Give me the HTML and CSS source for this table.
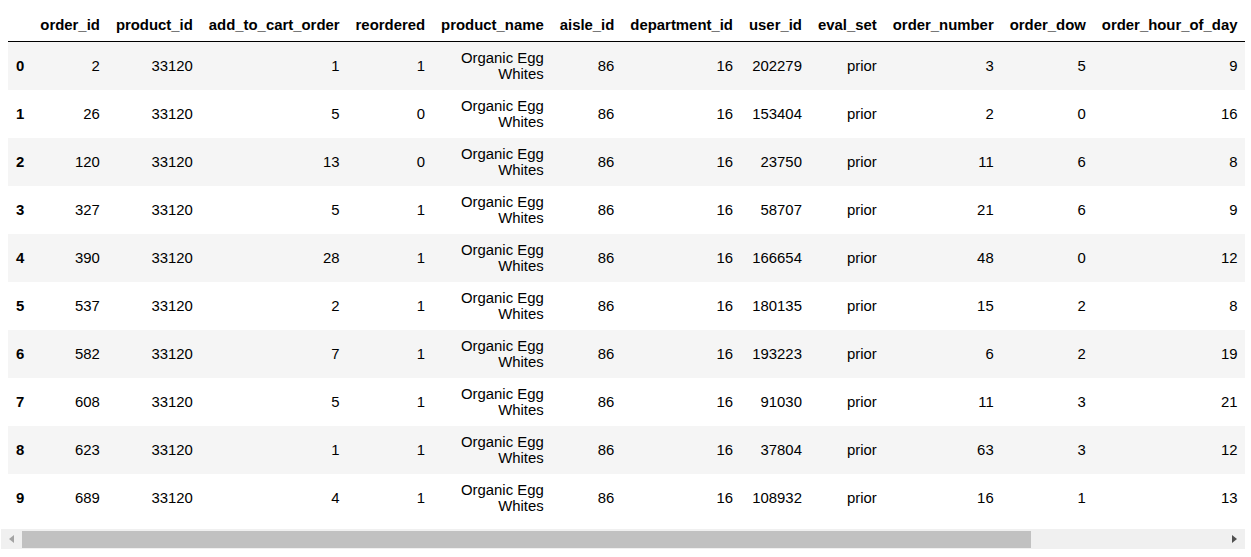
FILE: index.html
```html
<!DOCTYPE html>
<html>
<head>
<meta charset="utf-8">
<link rel="stylesheet" href="styles.css">
</head>
<body>
<div class="output">
  <div class="scroller">
    <table class="dataframe">
      <thead>
        <tr>
          <th class="idx"></th>
          <th>order_id</th>
          <th>product_id</th>
          <th>add_to_cart_order</th>
          <th>reordered</th>
          <th class="pname">product_name</th>
          <th>aisle_id</th>
          <th>department_id</th>
          <th>user_id</th>
          <th>eval_set</th>
          <th>order_number</th>
          <th>order_dow</th>
          <th>order_hour_of_day</th>
        </tr>
      </thead>
      <tbody>
        <tr><th class="idx">0</th><td>2</td><td>33120</td><td>1</td><td>1</td><td class="pname">Organic Egg Whites</td><td>86</td><td>16</td><td>202279</td><td>prior</td><td>3</td><td>5</td><td>9</td></tr>
        <tr><th class="idx">1</th><td>26</td><td>33120</td><td>5</td><td>0</td><td class="pname">Organic Egg Whites</td><td>86</td><td>16</td><td>153404</td><td>prior</td><td>2</td><td>0</td><td>16</td></tr>
        <tr><th class="idx">2</th><td>120</td><td>33120</td><td>13</td><td>0</td><td class="pname">Organic Egg Whites</td><td>86</td><td>16</td><td>23750</td><td>prior</td><td>11</td><td>6</td><td>8</td></tr>
        <tr><th class="idx">3</th><td>327</td><td>33120</td><td>5</td><td>1</td><td class="pname">Organic Egg Whites</td><td>86</td><td>16</td><td>58707</td><td>prior</td><td>21</td><td>6</td><td>9</td></tr>
        <tr><th class="idx">4</th><td>390</td><td>33120</td><td>28</td><td>1</td><td class="pname">Organic Egg Whites</td><td>86</td><td>16</td><td>166654</td><td>prior</td><td>48</td><td>0</td><td>12</td></tr>
        <tr><th class="idx">5</th><td>537</td><td>33120</td><td>2</td><td>1</td><td class="pname">Organic Egg Whites</td><td>86</td><td>16</td><td>180135</td><td>prior</td><td>15</td><td>2</td><td>8</td></tr>
        <tr><th class="idx">6</th><td>582</td><td>33120</td><td>7</td><td>1</td><td class="pname">Organic Egg Whites</td><td>86</td><td>16</td><td>193223</td><td>prior</td><td>6</td><td>2</td><td>19</td></tr>
        <tr><th class="idx">7</th><td>608</td><td>33120</td><td>5</td><td>1</td><td class="pname">Organic Egg Whites</td><td>86</td><td>16</td><td>91030</td><td>prior</td><td>11</td><td>3</td><td>21</td></tr>
        <tr><th class="idx">8</th><td>623</td><td>33120</td><td>1</td><td>1</td><td class="pname">Organic Egg Whites</td><td>86</td><td>16</td><td>37804</td><td>prior</td><td>63</td><td>3</td><td>12</td></tr>
        <tr><th class="idx">9</th><td>689</td><td>33120</td><td>4</td><td>1</td><td class="pname">Organic Egg Whites</td><td>86</td><td>16</td><td>108932</td><td>prior</td><td>16</td><td>1</td><td>13</td></tr>
      </tbody>
    </table>
  </div>
  <div class="hscroll">
    <div class="arrow left"></div>
    <div class="track"><div class="thumb"></div></div>
    <div class="arrow right"></div>
  </div>
</div>
</body>
</html>
```

FILE: styles.css
```css
html, body {
  margin: 0;
  padding: 0;
  background: #ffffff;
}

body {
  font-family: "Liberation Sans", Arial, sans-serif;
  font-size: 14.9px;
  color: #000000;
}

.output {
  width: 1244px;
  margin: 9px 0 0 1px;
}

.scroller {
  overflow: hidden;
  padding: 0 0 7px 7px;
}

.dataframe {
  border-collapse: collapse;
  border-spacing: 0;
  width: max-content;
  font-size: 14.9px;
  line-height: 16px;
}

.dataframe thead {
  border-bottom: 1px solid #000000;
}

.dataframe th,
.dataframe td {
  text-align: right;
  vertical-align: middle;
  padding: 8px;
  white-space: nowrap;
}

.dataframe th {
  font-weight: bold;
}

.dataframe td {
  font-weight: normal;
}

.dataframe th.idx {
  text-align: left;
}

.dataframe .pname {
  width: 1px;
}

.dataframe td.pname {
  white-space: normal;
}

.dataframe tbody tr:nth-child(odd) {
  background: #f5f5f5;
}

.dataframe tbody tr:nth-child(even) {
  background: #ffffff;
}

.dataframe tbody th,
.dataframe tbody td {
  height: 32px;
}

.hscroll {
  display: flex;
  height: 20px;
  background: #f0f0f0;
}

.arrow {
  width: 21px;
  flex: none;
  position: relative;
}

.arrow.right {
  width: 17px;
}

.arrow::after {
  content: "";
  position: absolute;
  top: 6px;
  width: 0;
  height: 0;
  border-top: 4px solid transparent;
  border-bottom: 4px solid transparent;
}

.arrow.left::after {
  left: 8px;
  border-right: 5px solid #a3a3a3;
}

.arrow.right::after {
  left: 4px;
  border-left: 5px solid #505050;
}

.track {
  flex: 1;
  display: flex;
  align-items: flex-start;
}

.thumb {
  width: 1009px;
  height: 17px;
  margin-top: 2px;
  background: #c1c1c1;
}
```
